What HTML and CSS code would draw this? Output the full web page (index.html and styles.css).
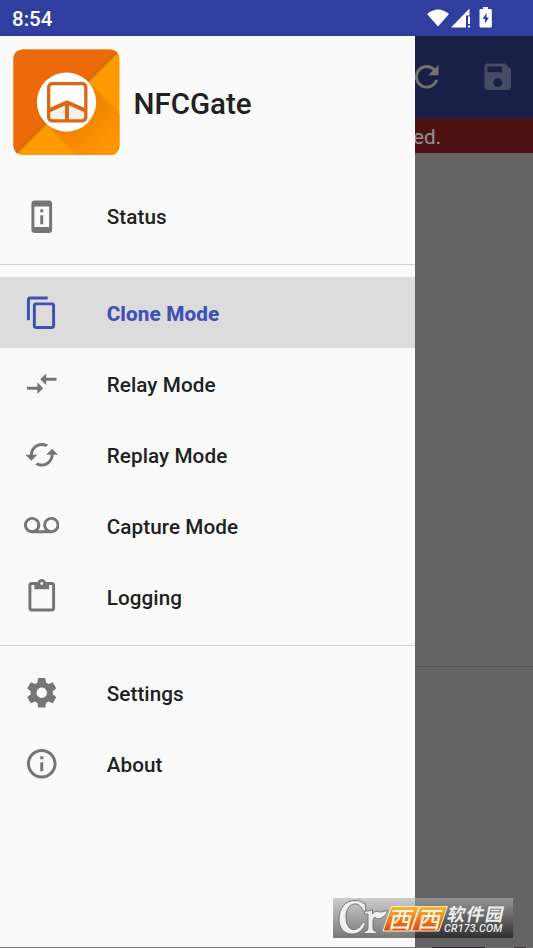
FILE: index.html
```html
<!DOCTYPE html>
<html lang="en">
<head>
<meta charset="utf-8">
<title>NFCGate</title>
<link rel="stylesheet" href="styles.css">
</head>
<body>
<div class="screen">
  <header class="status-bar">
    <span class="clock">8:54</span>
    <svg class="indicators" width="72" height="24" viewBox="0 0 72 24">
      <path d="M0 8Q11 -1 22 8L11 20.500Z"/>
      <path d="M24 21.500L42.500 2.500V9.500H39V21.500Z"/>
      <path d="M41 10.500h2v7.500h-2zM41 19.500h2v2h-2z"/>
      <path fill-rule="evenodd" d="M56 3v-2h5v2h2.500q1.300 0 1.300 1.300v15.900q0 1.300-1.300 1.300h-9.700q-1.300 0-1.300-1.300V4.300q0-1.300 1.300-1.300zM59.500 7l-4 6h2.500v4.500l4-6h-2.500z"/>
    </svg>
  </header>
  <div class="content">
    <aside class="drawer">
      <div class="brand">
        <svg class="logo" width="107" height="107" viewBox="0 0 108 108">
          <defs>
            <clipPath id="tile"><rect x=".5" y=".5" width="107" height="106.500" rx="9"/></clipPath>
            <linearGradient id="shade" x1="54" y1="54" x2="100" y2="100" gradientUnits="userSpaceOnUse"><stop offset=".3" stop-color="#f48400"/><stop offset="1" stop-color="#fd9700"/></linearGradient>
            <linearGradient id="fold" x1="53" y1="53" x2="56" y2="56" gradientUnits="userSpaceOnUse"><stop stop-color="#c55a08"/><stop offset="1" stop-color="#c55a08" stop-opacity="0"/></linearGradient>
          </defs>
          <g clip-path="url(#tile)">
            <path fill="#ff9a00" d="M0 0h108v108H0z"/>
            <path fill="url(#shade)" d="M75 32L108 65V108H65L33 75z"/>
            <path fill="#ec6a09" d="M0 0H106L0 106z"/>
            <path fill="url(#fold)" d="M106 0h6L0 112v-6z"/>
          </g>
          <circle cx="54" cy="53.500" r="29.900" fill="#fff"/>
          <path fill="#f7f2ee" d="M38 63L54 56L72 63V72H38z"/>
          <g fill="none" stroke="#df6515" stroke-width="3.300">
            <rect x="36" y="35" width="37.500" height="37.500" rx="3.500"/>
            <path d="M36.500 62L54.500 54L73 62M54.500 54V72" stroke-width="4"/>
          </g>
        </svg>
        <h1>NFCGate</h1>
      </div>
      <nav>
        <ul class="group">
          <li class="item"><svg class="icon" viewBox="0 0 24 24"><path d="M17 1.010L7 1c-1.100 0-2 .9-2 2v18c0 1.100.9 2 2 2h10c1.100 0 2-.9 2-2V3c0-1.100-.9-1.990-2-1.990zM17 19H7V5h10v14zM11 11h2v6h-2zM11 7h2v2h-2z"/></svg><span>Status</span></li>
        </ul>
        <ul class="group">
          <li class="item selected"><svg class="icon" viewBox="0 0 24 24"><path d="M16 1H4c-1.100 0-2 .9-2 2v14h2V3h12V1zm3 4H8c-1.100 0-2 .9-2 2v14c0 1.100.9 2 2 2h11c1.100 0 2-.9 2-2V7c0-1.100-.9-2-2-2zm0 16H8V7h11v14z"/></svg><span>Clone Mode</span></li>
          <li class="item"><svg class="icon" viewBox="0 0 24 24"><path d="M9.010 14H2v2h7.010v3L13 15l-3.990-4v3zm5.980-1v-3H22V8h-7.010V5L11 9l3.990 4z"/></svg><span>Relay Mode</span></li>
          <li class="item"><svg class="icon" viewBox="0 0 24 24"><path d="M19 8l-4 4h3c0 3.310-2.690 6-6 6-1.010 0-1.970-.25-2.800-.7l-1.460 1.460C8.970 19.540 10.430 20 12 20c4.420 0 8-3.580 8-8h3l-4-4zM6 12c0-3.310 2.690-6 6-6 1.010 0 1.970.25 2.800.7l1.460-1.460C15.030 4.460 13.570 4 12 4c-4.420 0-8 3.580-8 8H1l4 4 4-4H6z"/></svg><span>Replay Mode</span></li>
          <li class="item"><svg class="icon" viewBox="0 0 24 24"><path d="M18.500 6C15.460 6 13 8.460 13 11.500c0 1.330.47 2.550 1.260 3.500H9.740c.79-.95 1.260-2.170 1.260-3.500C11 8.460 8.540 6 5.500 6S0 8.460 0 11.500 2.460 17 5.500 17h13c3.040 0 5.500-2.460 5.500-5.500S21.540 6 18.500 6zm-13 9C3.570 15 2 13.430 2 11.500S3.570 8 5.500 8 9 9.570 9 11.500 7.430 15 5.500 15zm13 0c-1.930 0-3.500-1.570-3.500-3.500S16.570 8 18.500 8 22 9.570 22 11.500 20.430 15 18.500 15z"/></svg><span>Capture Mode</span></li>
          <li class="item"><svg class="icon" viewBox="0 0 24 24"><path d="M19 2h-4.180C14.400.84 13.300 0 12 0c-1.300 0-2.400.84-2.820 2H5c-1.100 0-2 .9-2 2v16c0 1.100.9 2 2 2h14c1.100 0 2-.9 2-2V4c0-1.100-.9-2-2-2zm-7 0c.55 0 1 .45 1 1s-.45 1-1 1-1-.45-1-1 .45-1 1-1zm7 18H5V4h2v3h10V4h2v16z"/></svg><span>Logging</span></li>
        </ul>
        <ul class="group">
          <li class="item"><svg class="icon" viewBox="0 0 24 24"><path d="M19.430 12.980c.04-.32.07-.64.07-.98s-.03-.66-.07-.98l2.110-1.650c.19-.15.24-.42.12-.64l-2-3.460c-.12-.22-.39-.3-.61-.22l-2.490 1c-.52-.4-1.080-.73-1.690-.98l-.38-2.650C14.460 2.180 14.250 2 14 2h-4c-.25 0-.46.18-.49.42l-.38 2.650c-.61.25-1.170.59-1.690.98l-2.490-1c-.23-.09-.49 0-.61.22l-2 3.460c-.13.22-.07.49.12.64l2.110 1.650c-.04.32-.07.65-.07.98s.03.66.07.98l-2.110 1.650c-.19.15-.24.42-.12.64l2 3.460c.12.22.39.3.61.22l2.490-1c.52.4 1.080.73 1.690.98l.38 2.650c.03.24.24.42.49.42h4c.25 0 .46-.18.49-.42l.38-2.650c.61-.25 1.170-.59 1.690-.98l2.490 1c.23.09.49 0 .61-.22l2-3.460c.12-.22.07-.49-.12-.64l-2.110-1.650zM12 15.500c-1.930 0-3.500-1.570-3.500-3.500s1.570-3.500 3.500-3.500 3.500 1.570 3.500 3.500-1.570 3.500-3.500 3.500z"/></svg><span>Settings</span></li>
          <li class="item"><svg class="icon" viewBox="0 0 24 24"><path d="M11 17h2v-6h-2v6zm1-15C6.480 2 2 6.480 2 12s4.480 10 10 10 10-4.480 10-10S17.520 2 12 2zm0 18c-4.410 0-8-3.590-8-8s3.590-8 8-8 8 3.590 8 8-3.590 8-8 8zM11 9h2V7h-2v2z"/></svg><span>About</span></li>
        </ul>
      </nav>
    </aside>
    <main class="page">
      <div class="toolbar">
        <svg class="action refresh" viewBox="0 0 24 24"><path d="M17.650 6.350C16.200 4.900 14.210 4 12 4c-4.420 0-7.990 3.580-7.990 8s3.570 8 7.990 8c3.730 0 6.840-2.550 7.730-6h-2.080c-.82 2.330-3.040 4-5.650 4-3.310 0-6-2.690-6-6s2.690-6 6-6c1.660 0 3.140.69 4.220 1.780L13 11h7V4l-2.350 2.350z"/></svg>
        <svg class="action save" viewBox="0 0 24 24"><path d="M17 3H5c-1.110 0-2 .9-2 2v14c0 1.100.89 2 2 2h14c1.100 0 2-.9 2-2V7l-4-4zm-5 16c-1.660 0-3-1.340-3-3s1.340-3 3-3 3 1.340 3 3-1.340 3-3 3zm3-10H5V5h10v4z"/></svg>
      </div>
      <div class="banner"><span>ed.</span></div>
      <div class="pane upper"></div>
      <div class="pane"></div>
    </main>
  </div>
  <footer class="bottom-edge"></footer>
  <div class="watermark">
    <svg width="180" height="40" viewBox="0 0 180 40">
      <defs>
        <linearGradient id="orange" x1="0" y1="0" x2="0" y2="1"><stop stop-color="#f8b632"/><stop offset="1" stop-color="#dc4a13"/></linearGradient>
      </defs>
      <g fill="#f0f0f0" stroke="#777" stroke-width="1" stroke-linejoin="round">
        <path d="M32 5L33 13.500L30.500 13C28 7.500 25 5.500 21.500 6C15.500 6.500 12.500 13 13 20.500C13.500 28 17 32 21.500 31.500C26 31 28.500 27 30 24L32.500 25.500C30 32.500 25 36.500 18 36C10 35.500 6 29 6 21C6 10.500 12 2.500 22 2.500C26 2.500 28 3.500 29.500 5Z"/>
        <path d="M35 13L39.500 12V16C42 12 45 14 47 14C50 14 52 13 54.500 12.500C53 18.500 46 23 42 19.500C40.500 19 40 21 40 23V31Q40 33 43.500 33.500V35.500H31V33.500Q35 33 35 31V16H31L32 13Z"/>
      </g>
      <g fill="url(#orange)" stroke="#fff0d0" stroke-width="1" stroke-linejoin="round">
        <path d="M58.500 8.500H86L77.500 33H50z"/><path d="M87 8.500H114.500L106 33H78.500z"/>
      </g>
    </svg>
    <span class="wm-xi">西西</span>
    <span class="wm-name">软件园</span>
    <span class="wm-site">CR173.COM</span>
  </div>
</div>
</body>
</html>
```
FILE: styles.css
```css
* { box-sizing: border-box; }
body { margin: 0; font-family: Roboto, "Liberation Sans", sans-serif; }
.screen {
  position: relative;
  display: flex;
  flex-direction: column;
  width: 533px;
  height: 948px;
  overflow: hidden;
  background: #646464;
}
.status-bar {
  display: flex;
  flex: none;
  align-items: center;
  justify-content: space-between;
  height: 35.500px;
  padding: 0 34.500px 0 12px;
  background: #303f9f;
  color: #fff;
}
.clock { font-size: 20.500px; font-weight: 500; line-height: 35px; padding-top: 3px; }
.indicators { fill: #fff; }
.content { display: flex; flex: 1; min-height: 0; }
.drawer { flex: none; width: 414.600px; background: #fafafa; }
.brand { display: flex; align-items: center; gap: 13.500px; height: 145.500px; padding: 0 13px 12px; }
.logo { flex: none; }
h1 { margin: 0; padding-top: 3px; font-size: 29.500px; font-weight: 500; color: #212121; }
.group { margin: 0; padding: 0; list-style: none; }
.group + .group { margin-top: 12px; padding-top: 12px; border-top: 1px solid #d4d4d4; }
.item {
  display: flex;
  align-items: center;
  gap: 47.700px;
  height: 71.100px;
  padding-left: 23.500px;
  color: #212121;
  font-size: 20.700px;
  font-weight: 500;
  letter-spacing: .07px;
}
.item span { padding-top: 1.900px; }
.icon { flex: none; width: 35.500px; height: 35.500px; fill: #757575; }
.item.selected { background: #dcdcdc; color: #3f51b5; font-weight: 800; letter-spacing: .12px; }
.item.selected .icon { fill: #3f51b5; }
.page { flex: 1; min-width: 0; display: flex; flex-direction: column; overflow: hidden; }
.toolbar { display: flex; flex: none; align-items: center; gap: 35.500px; height: 82px; background: #192048; }
.action { flex: none; width: 35.500px; height: 35.500px; }
.refresh { margin-left: -6px; fill: #747469; }
.save { fill: #464b66; }
.banner { flex: none; height: 35px; line-height: 38px; background: #4f1212; color: #929292; font-size: 20.700px; }
.banner span { margin-left: -1.500px; }
.pane { flex: 1; }
.pane.upper { flex: none; height: 514px; border-bottom: 1px solid #545454; }
.bottom-edge {
  flex: none;
  height: 1px;
  background: linear-gradient(90deg, #707070 432px, #292329 432px, #292329 485px, #707070 485px, #707070 514px, #403434 514px, #403434 526px, #707070 526px);
}
.watermark {
  position: absolute;
  left: 333px;
  top: 898px;
  width: 180px;
  height: 40px;
  background: linear-gradient(rgba(179, 179, 179, .63), rgba(0, 0, 0, .52));
  font-family: "Noto Sans CJK SC", sans-serif;
  color: #eee;
}
.watermark svg { display: block; }
.watermark span { position: absolute; white-space: nowrap; line-height: 1; transform: skewX(-12deg); }
.wm-xi { left: 57px; top: 9px; font-size: 23px; font-weight: 500; letter-spacing: 6px; color: #fff3da; }
.wm-name { left: 115px; top: 6px; font-size: 18px; font-weight: 700; letter-spacing: 1px; }
.watermark .wm-site { left: 111px; top: 26px; font: italic 500 10.700px/1 Roboto, sans-serif; letter-spacing: .2px; transform: none; }
```
